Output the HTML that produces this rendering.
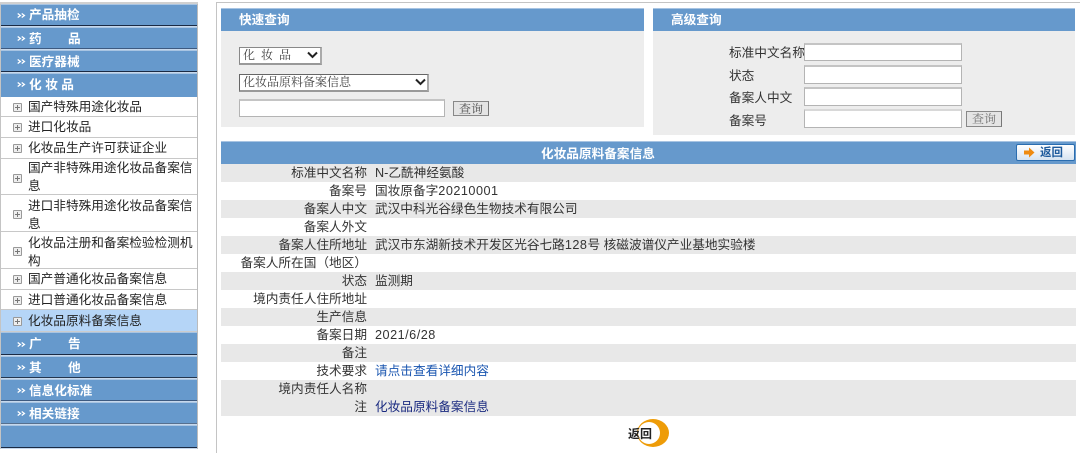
<!DOCTYPE html>
<html><head><meta charset="utf-8">
<style>
html,body{margin:0;padding:0;background:#fff;width:1080px;height:453px;overflow:hidden}
body{position:relative;font-family:"Liberation Sans","Noto Sans CJK SC",sans-serif;font-size:12.67px;color:#222}
div,span,a{position:absolute;white-space:nowrap}
.h{--d:#1a2a44;left:1px;width:196px;box-sizing:border-box;border-top:1px solid #a8c4e2;background:linear-gradient(to bottom,#6699cc calc(100% - 2px),var(--d) calc(100% - 2px),var(--d) calc(100% - 1px),#c6d8ec calc(100% - 1px));color:#fff;font-weight:bold;font-size:12.67px;line-height:20px}
.h svg{position:absolute;left:16px}
.h span{left:28px}
.r{left:1px;width:196px;box-sizing:border-box;border-bottom:1px solid #c8c8c8;background:#fff;color:#222}
.r i{position:absolute;left:12px;width:7px;height:7px;border:1px solid #999;background:#eee;border-radius:1px}
.r i:after{content:"";position:absolute;left:1px;top:3px;width:5px;height:1px;background:#777}
.r i:before{content:"";position:absolute;left:3px;top:1px;width:1px;height:5px;background:#777}
.r span{left:27px;line-height:20px}
.bar{background:#6699cc;color:#fff;font-weight:bold;border-top:1px solid #a8c4e2;box-sizing:border-box}
.panel{background:#ededed}
.sel{box-sizing:border-box;background:#fff;border:1px solid #666;border-right:2px solid #aaa;border-bottom:2px solid #999;font-size:12px;color:#444;line-height:14px;font-family:"Liberation Serif","Noto Serif CJK SC",serif}
.sel span{left:3px;top:0}
.sel svg{position:absolute;top:3px}
.inp{box-sizing:border-box;background:#fff;border:1px solid #b4b4b4;border-top:2px solid #c4c4c4}
.btn{box-sizing:border-box;background:#e4e4e4;border:1px solid #888;border-right:1px solid #777;text-align:center;font-family:"Liberation Serif","Noto Serif CJK SC",serif;font-size:12px;color:#555;line-height:14px}
.lab{color:#333;line-height:16px}
.row{left:221px;width:855px;height:18px;line-height:18px}
.g{background:#e8e8e8}
.row .k{right:709px;color:#333;top:0}
.row .v{left:154px;top:0;color:#333}
.n{position:static;letter-spacing:.5px}
</style></head><body>
<svg width="0" height="0" style="position:absolute"><defs><g id="c"><path d="M.7.5L3.4 2.5L.7 4.5M4.7.5L7.4 2.5L4.7 4.5" fill="none" stroke="#fff" stroke-width="1.3"/></g></defs></svg>
<div style="left:0;top:2px;width:1px;height:447px;background:#c4c4c4"></div>
<div style="left:197px;top:2px;width:1px;height:447px;background:#bbb"></div>
<div style="left:0;top:2px;width:198px;height:2px;background:#d0d0d0"></div>
<div style="left:216px;top:2px;width:864px;height:1px;background:#c4c4c4"></div>
<div style="left:216px;top:2px;width:1px;height:451px;background:#c4c4c4"></div>

<div class="h" style="top:4px;height:23px"><svg style="top:8px" width="9" height="5"><use href="#c"/></svg><span style="top:0">产品抽检</span></div>
<div class="h" style="top:27px;height:23px;--d:#3d5a80"><svg style="top:8px" width="9" height="5"><use href="#c"/></svg><span style="top:1px">药<span style="left:39px;top:0">品</span></span></div>
<div class="h" style="top:50px;height:23px"><svg style="top:8px" width="9" height="5"><use href="#c"/></svg><span style="top:1px">医疗器械</span></div>
<div class="h" style="top:73px;height:24px;background:#6699cc"><svg style="top:8px" width="9" height="5"><use href="#c"/></svg><span style="top:1px;letter-spacing:3.5px">化妆品</span></div>

<div class="r" style="top:97px;height:20px"><i style="top:6px"></i><span style="top:0">国产特殊用途化妆品</span></div>
<div class="r" style="top:117px;height:21px"><i style="top:6px"></i><span style="top:0">进口化妆品</span></div>
<div class="r" style="top:138px;height:21px"><i style="top:6px"></i><span style="top:0">化妆品生产许可获证企业</span></div>
<div class="r" style="top:159px;height:36px"><i style="top:15px"></i><span style="top:0;line-height:18px">国产非特殊用途化妆品备案信<br>息</span></div>
<div class="r" style="top:195px;height:37px"><i style="top:15px"></i><span style="top:2px;line-height:18px">进口非特殊用途化妆品备案信<br>息</span></div>
<div class="r" style="top:232px;height:37px"><i style="top:15px"></i><span style="top:2px;line-height:18px">化妆品注册和备案检验检测机<br>构</span></div>
<div class="r" style="top:269px;height:21px"><i style="top:6px"></i><span style="top:0">国产普通化妆品备案信息</span></div>
<div class="r" style="top:290px;height:20px"><i style="top:6px"></i><span style="top:0">进口普通化妆品备案信息</span></div>
<div class="r" style="top:310px;height:22px;background:#b5d5f7;border-bottom:1px solid #ccc"><i style="top:7px"></i><span style="top:1px">化妆品原料备案信息</span></div>

<div class="h" style="top:332px;height:24px"><svg style="top:9px" width="9" height="5"><use href="#c"/></svg><span style="top:1px">广<span style="left:39px;top:0">告</span></span></div>
<div class="h" style="top:356px;height:23px;--d:#24364f"><svg style="top:8px" width="9" height="5"><use href="#c"/></svg><span style="top:1px">其<span style="left:39px;top:0">他</span></span></div>
<div class="h" style="top:379px;height:23px;--d:#3d5a80"><svg style="top:8px" width="9" height="5"><use href="#c"/></svg><span style="top:1px">信息化标准</span></div>
<div class="h" style="top:402px;height:23px;--d:#56708f"><svg style="top:8px" width="9" height="5"><use href="#c"/></svg><span style="top:1px">相关链接</span></div>
<div class="h" style="top:425px;height:24px"></div>

<div class="panel" style="left:221px;top:8px;width:423px;height:119px"></div>
<div class="bar" style="left:221px;top:8px;width:423px;height:23px;line-height:22px"><span style="left:18px;top:0">快速查询</span></div>
<div class="sel" style="left:239px;top:47px;width:83px;height:18px;border-color:#888 #aaa #999 #888"><span>化 &nbsp;妆 &nbsp;品</span><svg style="left:67px" width="11" height="8"><path d="M1 1.5L5.5 6L10 1.5" fill="none" stroke="#222" stroke-width="2"/></svg></div>
<div class="sel" style="left:239px;top:74px;width:190px;height:18px"><span>化妆品原料备案信息</span><svg style="left:175px" width="11" height="8"><path d="M1 1.5L5.5 6L10 1.5" fill="none" stroke="#222" stroke-width="2"/></svg></div>
<div class="inp" style="left:239px;top:99px;width:206px;height:18px"></div>
<div class="btn" style="left:453px;top:101px;width:36px;height:15px">查询</div>

<div class="panel" style="left:653px;top:8px;width:422px;height:127px"></div>
<div class="bar" style="left:653px;top:8px;width:422px;height:23px;line-height:22px"><span style="left:18px;top:0">高级查询</span></div>
<div class="lab" style="left:729px;top:45px">标准中文名称</div>
<div class="lab" style="left:729px;top:68px">状态</div>
<div class="lab" style="left:729px;top:90px">备案人中文</div>
<div class="lab" style="left:729px;top:113px">备案号</div>
<div class="inp" style="left:804px;top:43px;width:158px;height:18px"></div>
<div class="inp" style="left:804px;top:65px;width:158px;height:19px"></div>
<div class="inp" style="left:804px;top:87px;width:158px;height:19px"></div>
<div class="inp" style="left:804px;top:109px;width:158px;height:19px;border-top-color:#d8d8d8"></div>
<div class="btn" style="left:966px;top:111px;width:36px;height:16px;color:#777">查询</div>

<div class="bar" style="left:221px;top:141px;width:855px;height:23px;line-height:24px"><span style="left:320px;top:0">化妆品原料备案信息</span></div>
<div style="left:1016px;top:144px;width:59px;height:17px;box-sizing:border-box;background:linear-gradient(#fff,#d6e3f1);border:1px solid #2a6db0;border-radius:2px;color:#1d5a9c;font-weight:bold;font-size:11.5px;line-height:16px">
<svg style="position:absolute;left:7px;top:2px" width="11" height="11"><path d="M0 3.5H5V.5L10.5 5.5L5 10.5V7.5H0Z" fill="#ee8a10"/></svg><span style="left:23px;top:0">返回</span></div>

<div class="row g" style="top:164px"><span class="k">标准中文名称</span><span class="v">N-乙酰神经氨酸</span></div>
<div class="row" style="top:182px"><span class="k">备案号</span><span class="v">国妆原备字<span class="n">20210001</span></span></div>
<div class="row g" style="top:200px"><span class="k">备案人中文</span><span class="v">武汉中科光谷绿色生物技术有限公司</span></div>
<div class="row" style="top:218px"><span class="k">备案人外文</span></div>
<div class="row g" style="top:236px"><span class="k">备案人住所地址</span><span class="v">武汉市东湖新技术开发区光谷七路<span class="n">128</span>号 核磁波谱仪产业基地实验楼</span></div>
<div class="row" style="top:254px"><span class="k">备案人所在国（地区）</span></div>
<div class="row g" style="top:272px"><span class="k">状态</span><span class="v">监测期</span></div>
<div class="row" style="top:290px"><span class="k">境内责任人住所地址</span></div>
<div class="row g" style="top:308px"><span class="k">生产信息</span></div>
<div class="row" style="top:326px"><span class="k">备案日期</span><span class="v"><span class="n">2021/6/28</span></span></div>
<div class="row g" style="top:344px"><span class="k">备注</span></div>
<div class="row" style="top:362px"><span class="k">技术要求</span><span class="v" style="color:#1a56b0">请点击查看详细内容</span></div>
<div class="row g" style="top:380px"><span class="k">境内责任人名称</span></div>
<div class="row g" style="top:398px"><span class="k">注</span><span class="v" style="color:#1a2a80">化妆品原料备案信息</span></div>

<svg style="position:absolute;left:636px;top:418px" width="34" height="30"><ellipse cx="17" cy="15" rx="16" ry="14" fill="#ee9c08"/><circle cx="13" cy="15" r="11" fill="#fff"/></svg>
<div style="left:628px;top:427px;font-weight:bold;font-size:12px;line-height:14px;color:#222">返回</div>
</body></html>
